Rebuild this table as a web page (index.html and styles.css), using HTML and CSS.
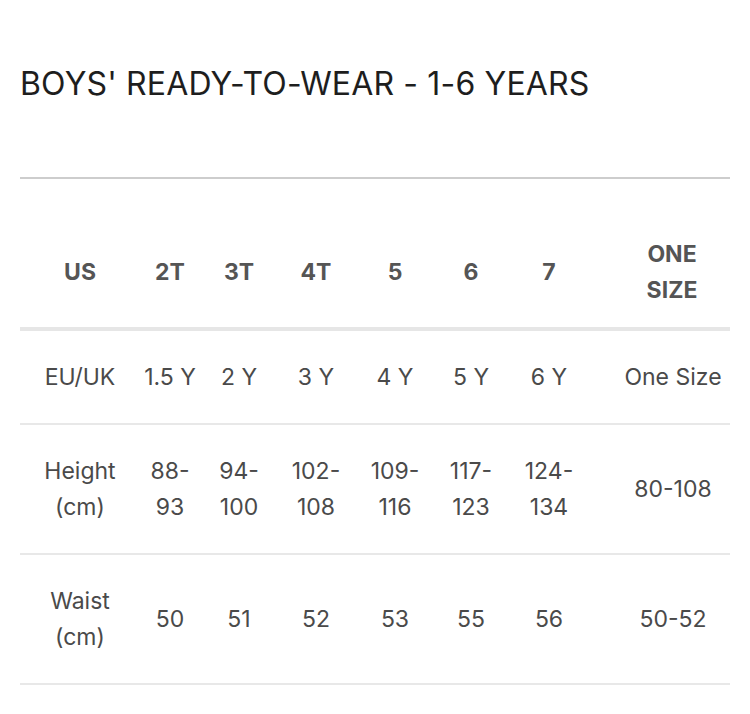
FILE: index.html
```html
<!DOCTYPE html>
<html lang="en">
<head>
<meta charset="utf-8">
<title>Size guide</title>
<link rel="stylesheet" href="styles.css">
</head>
<body>
<main class="guide">
  <h1 class="title">BOYS' READY-TO-WEAR - 1-6 YEARS</h1>
  <table class="chart">
    <colgroup>
      <col class="c1"><col class="c2"><col class="c3"><col class="c4">
      <col class="c5"><col class="c6"><col class="c7"><col class="c8">
    </colgroup>
    <thead>
      <tr>
        <th>US</th><th>2T</th><th>3T</th><th>4T</th><th>5</th><th>6</th><th>7</th><th class="last">ONE SIZE</th>
      </tr>
    </thead>
    <tbody>
      <tr>
        <td>EU/UK</td><td>1.5 Y</td><td>2 Y</td><td>3 Y</td><td>4 Y</td><td>5 Y</td><td>6 Y</td><td class="last">One Size</td>
      </tr>
      <tr>
        <td>Height (cm)</td><td>88-93</td><td>94-100</td><td>102-108</td><td>109-116</td><td>117-123</td><td>124-134</td><td class="last">80-108</td>
      </tr>
      <tr>
        <td>Waist (cm)</td><td>50</td><td>51</td><td>52</td><td>53</td><td>55</td><td>56</td><td class="last">50-52</td>
      </tr>
    </tbody>
  </table>
</main>
</body>
</html>
```

FILE: styles.css
```css
html, body {
  margin: 0;
  padding: 0;
  background: #ffffff;
}

.guide {
  padding: 0 20px;
  font-family: Inter, "Liberation Sans", sans-serif;
}

.title {
  margin: 0;
  padding-top: 66px;
  height: 111px;
  box-sizing: border-box;
  font-size: 32px;
  font-weight: 400;
  line-height: 36px;
  color: #1e1e1e;
  letter-spacing: 0.15px;
}

.chart {
  width: 710px;
  table-layout: fixed;
  border-collapse: collapse;
  border-top: 2px solid #cdcdcd;
  font-size: 23px;
  line-height: 36px;
  color: #4a4a4a;
  margin-top: 66px;
}

.c1 { width: 120px; }
.c2 { width: 60px; }
.c3 { width: 78px; }
.c4 { width: 76px; }
.c5 { width: 82px; }
.c6 { width: 70px; }
.c7 { width: 86px; }
.c8 { width: 138px; }

.chart th,
.chart td {
  padding: 28px 0;
  text-align: center;
  vertical-align: middle;
}

.chart th {
  font-weight: 700;
  color: #555555;
  padding-top: 57px;
  padding-bottom: 19px;
}

.chart thead tr {
  border-bottom: 4px solid #e6e6e6;
}

.chart tbody tr {
  border-bottom: 2px solid #e8e8e8;
}

.chart td:first-child {
  padding-left: 8px;
  padding-right: 8px;
}

.chart td:nth-child(5) {
  padding-left: 6px;
  padding-right: 6px;
}

.chart .last {
  padding-left: 24px;
}

.chart th.last {
  padding-left: 50px;
  padding-right: 28px;
}
```
